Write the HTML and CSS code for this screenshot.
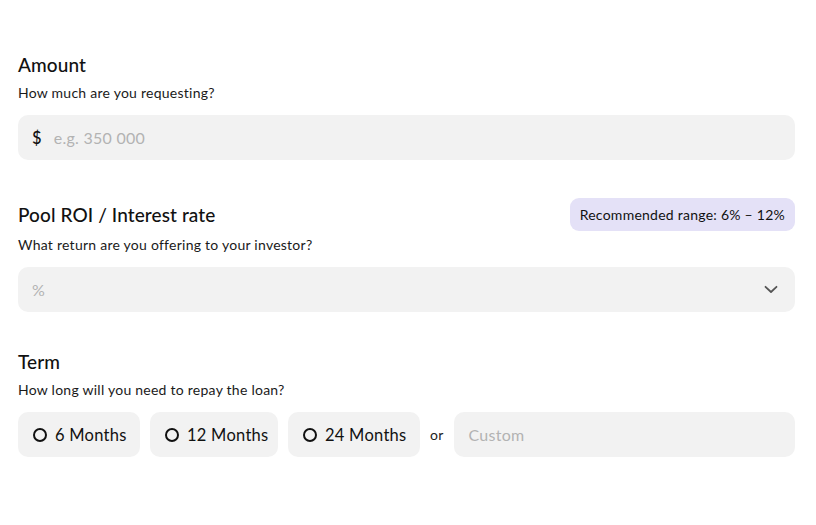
FILE: index.html
```html
<!DOCTYPE html>
<html>
<head>
<meta charset="utf-8">
<link rel="stylesheet" href="styles.css">
</head>
<body>
<div class="form">
  <section class="field">
    <div class="head"><h2 class="title">Amount</h2></div>
    <p class="sub">How much are you requesting?</p>
    <div class="box">
      <span class="prefix">$</span>
      <span class="ph">e.g. 350 000</span>
    </div>
  </section>

  <section class="field">
    <div class="head head-badge">
      <h2 class="title">Pool ROI / Interest rate</h2>
      <span class="badge">Recommended range: 6% – 12%</span>
    </div>
    <p class="sub sub-badge">What return are you offering to your investor?</p>
    <div class="box select">
      <span class="ph">%</span>
      <svg class="chev" width="14" height="9" viewBox="0 0 14 9"><path d="M1.5 1.8 L7 7 L12.5 1.8" fill="none" stroke="#555" stroke-width="1.8" stroke-linecap="round" stroke-linejoin="round"/></svg>
    </div>
  </section>

  <section class="field">
    <div class="head"><h2 class="title">Term</h2></div>
    <p class="sub">How long will you need to repay the loan?</p>
    <div class="terms">
      <div class="chip c6"><span class="radio"></span>6 Months</div>
      <div class="chip c12"><span class="radio"></span>12 Months</div>
      <div class="chip c24"><span class="radio"></span>24 Months</div>
      <span class="or">or</span>
      <div class="box custom"><span class="ph">Custom</span></div>
    </div>
  </section>
</div>
</body>
</html>
```

FILE: styles.css
```css
* { box-sizing: border-box; }
html, body { margin: 0; padding: 0; background: #fff; }
body {
  font-family: Lato, "Noto Sans", "Liberation Sans", sans-serif;
  color: #111;
  letter-spacing: 0.25px;
}
.form {
  padding: 53px 21px 0 18px;
  display: flex;
  flex-direction: column;
  gap: 38px;
}
.field { display: flex; flex-direction: column; }
.head { display: flex; align-items: center; justify-content: space-between; height: 24px; }
.head-badge { height: 33px; }
.title {
  margin: 0;
  font-size: 19px;
  font-weight: 500;
  line-height: 24px;
  color: #111;
  letter-spacing: 0.1px;
}
.sub {
  margin: 7px 0 13px;
  font-size: 14px;
  line-height: 18px;
  color: #1a1a1a;
}
.sub-badge { margin-top: 5px; }
.badge {
  background: #e4e1f7;
  border-radius: 9px;
  height: 33px;
  padding: 0 10px;
  display: flex;
  align-items: center;
  font-size: 14px;
  color: #111;
}
.box {
  height: 45px;
  background: #f2f2f2;
  border-radius: 10px;
  display: flex;
  align-items: center;
  padding: 0 20px 0 14px;
  font-size: 16px;
}
.prefix { font-weight: 500; color: #111; margin-right: 12px; font-size: 16.5px; }
.ph { color: #b3b3b3; }
.select { justify-content: space-between; padding-left: 14px; padding-right: 17px; }
.chev { display: block; }
.terms { display: flex; align-items: center; gap: 10px; }
.chip {
  flex: none;
  white-space: nowrap;
  height: 45px;
  background: #f2f2f2;
  border-radius: 10px;
  display: flex;
  align-items: center;
  padding: 0 0 0 15px;
  font-size: 16.5px;
  color: #111;
}
.c6 { width: 122px; }
.c12 { width: 128px; }
.c24 { width: 132px; }
.radio {
  width: 14px;
  height: 14px;
  border: 2.5px solid #111;
  border-radius: 50%;
  margin-right: 8px;
  flex: none;
}
.or { font-size: 14px; color: #222; }
.custom { flex: 1; padding-left: 15px; }
```
